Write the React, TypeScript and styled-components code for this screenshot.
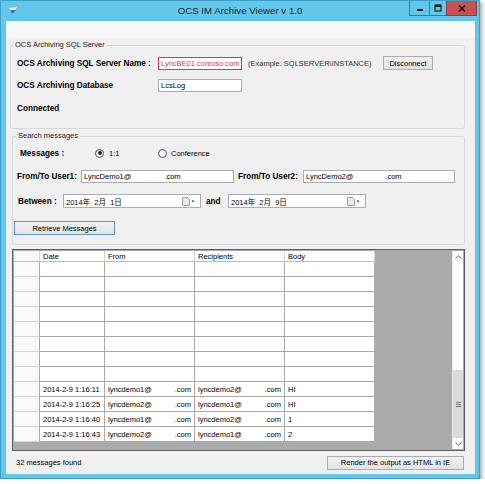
import React from "react";
import styled, { createGlobalStyle } from "styled-components";

const SANS = `"Liberation Sans", Arial, "Noto Sans CJK SC", sans-serif`;

const colors = {
  frame: "#63c7eb",
  frameEdge: "#3f9fc9",
  face: "#f0f0f0",
  groupLine: "#d3d8dc",
  field: "#abadb3",
  alert: "#e2363c",
  gridLine: "#a9a9a9",
  workspace: "#ababab",
};

const GlobalStyle = createGlobalStyle`
  html, body { margin: 0; padding: 0; background: #fff; }
  body { font-family: ${SANS}; font-size: 7.5px; color: #000; }
  *, *::before, *::after { box-sizing: border-box; }
`;

const Window = styled.div`
  width: 480px;
  height: 479px;
  display: flex;
  flex-direction: column;
  background: ${colors.frame};
  border: 1px solid ${colors.frameEdge};
  box-shadow: 2px 2px 4px rgba(0, 0, 0, 0.35);
`;

const TitleBar = styled.div`
  height: 20px;
  display: grid;
  grid-template-columns: 1fr auto 1fr;
`;

const AppIcon = styled.div`
  padding: 5px 0 0 6px;
  line-height: 0;
`;

const Title = styled.div`
  font-size: 9.7px;
  line-height: 20px;
  color: #1e1e1e;
  white-space: nowrap;
`;

const CaptionButtons = styled.div`
  justify-self: end;
  display: flex;
  align-items: flex-start;
  margin-right: 2px;
`;

type CaptionKind = "min" | "max" | "close";

const captionWidth: Record<CaptionKind, number> = { min: 21, max: 18, close: 31 };

const CaptionButton = styled.div<{ $kind: CaptionKind }>`
  width: ${(p) => captionWidth[p.$kind]}px;
  height: 15px;
  margin-left: -1px;
  display: flex;
  align-items: center;
  justify-content: center;
  background: ${(p) => (p.$kind === "close" ? "#c75050" : colors.frame)};
  border: 1px solid ${(p) => (p.$kind === "close" ? "#8d3b3b" : "#2f7fa3")};
  border-top: none;
  line-height: 0;
`;

const Client = styled.div`
  flex: 1;
  margin: 0 4px 4px 5px;
  background: ${colors.face};
  display: flex;
  flex-direction: column;
`;

const MenuBand = styled.div`
  height: 17px;
  background: #f8f8f8;
`;

const GroupBox = styled.fieldset<{ $left: number; $bottom: number }>`
  margin: 2px 10px 0 ${(p) => p.$left}px;
  padding: 0 0 ${(p) => p.$bottom}px 0;
  min-width: 0;
  border: 1px solid ${colors.groupLine};
  border-radius: 3px;
`;

const Legend = styled.legend<{ $indent: number }>`
  margin-left: ${(p) => p.$indent}px;
  padding: 0 2px;
  font-size: 7.5px;
  line-height: 10px;
  color: #1a1a1a;
`;

const FieldRow = styled.div<{ $top: number; $indent: number }>`
  display: flex;
  align-items: center;
  height: 16px;
  margin-top: ${(p) => p.$top}px;
  padding-left: ${(p) => p.$indent}px;
`;

const Label = styled.span<{ $w?: number; $gap?: number }>`
  flex: none;
  width: ${(p) => (p.$w ? `${p.$w}px` : "auto")};
  margin-left: ${(p) => p.$gap ?? 0}px;
  font-size: 8.2px;
  font-weight: bold;
  white-space: nowrap;
`;

const Hint = styled.span`
  flex: none;
  width: 141px;
  padding-left: 6px;
  color: #333;
  white-space: nowrap;
`;

const TextBox = styled.div<{ $w: number; $alert?: boolean }>`
  flex: none;
  width: ${(p) => p.$w}px;
  height: 13px;
  display: flex;
  align-items: center;
  padding-left: 2px;
  background: #fff;
  border: 1px solid ${(p) => (p.$alert ? colors.alert : colors.field)};
  color: ${(p) => (p.$alert ? colors.alert : "#000")};
  white-space: nowrap;
  overflow: hidden;
`;

const Blank = styled.span<{ $w: number }>`
  display: inline-block;
  width: ${(p) => p.$w}px;
`;

const Button = styled.div<{ $w: number; $default?: boolean }>`
  flex: none;
  width: ${(p) => p.$w}px;
  height: 14px;
  display: flex;
  align-items: center;
  justify-content: center;
  background: linear-gradient(#f2f2f2, #e3e3e3);
  border: 1px solid ${(p) => (p.$default ? "#5f98d0" : "#acacac")};
  white-space: nowrap;
`;

const RadioOption = styled.label<{ $w: number; $gap: number }>`
  flex: none;
  width: ${(p) => p.$w}px;
  display: flex;
  align-items: center;
  gap: ${(p) => p.$gap}px;
`;

const RadioDot = styled.span<{ $checked?: boolean }>`
  width: 9px;
  height: 9px;
  border-radius: 50%;
  border: 1px solid #4d4d4d;
  background: #fff;
  display: flex;
  align-items: center;
  justify-content: center;

  &::after {
    content: "";
    width: 4px;
    height: 4px;
    border-radius: 50%;
    background: ${(p) => (p.$checked ? "#262626" : "transparent")};
  }
`;

const DatePicker = styled.div`
  flex: none;
  width: 138px;
  height: 14px;
  display: flex;
  align-items: center;
  justify-content: space-between;
  padding: 0 5px 0 2px;
  background: #fff;
  border: 1px solid ${colors.field};
  white-space: pre;
`;

const Grid = styled.div`
  margin: 4px 10px 0 6px;
  height: 202px;
  display: flex;
  padding: 1px;
  background: ${colors.workspace};
  border: 1px solid #5f5f5f;
`;

const GridBody = styled.div`
  flex: 1;
`;

const GridRow = styled.div<{ $header?: boolean }>`
  display: flex;
  height: ${(p) => (p.$header ? 11 : 15)}px;
`;

type CellKind = "corner" | "colHead" | "rowHead" | "data";

const Cell = styled.div<{ $w: number; $kind: CellKind }>`
  flex: none;
  width: ${(p) => p.$w}px;
  display: flex;
  align-items: center;
  justify-content: space-between;
  padding: 0 3px;
  white-space: nowrap;
  overflow: hidden;
  background: ${(p) => (p.$kind === "rowHead" || p.$kind === "corner" ? "#f9f9f9" : "#fff")};
  border-right: 1px solid
    ${(p) => (p.$kind === "colHead" || p.$kind === "corner" ? "#d4d4d4" : colors.gridLine)};
  border-bottom: 1px solid
    ${(p) => (p.$kind === "rowHead" ? "#d6d6d6" : p.$kind === "data" ? colors.gridLine : "#bdbdbd")};
`;

const ScrollBar = styled.div`
  width: 11px;
  display: flex;
  flex-direction: column;
  background: #fff;
  border-left: 1px solid #e6e6e6;
`;

const ScrollArrow = styled.div`
  height: 11px;
  display: flex;
  align-items: center;
  justify-content: center;
  background: #fff;
  line-height: 0;
`;

const ScrollTrack = styled.div`
  flex: 1;
  display: flex;
  flex-direction: column;
  justify-content: flex-end;
`;

const ScrollThumb = styled.div`
  height: 68px;
  display: flex;
  align-items: center;
  justify-content: center;
  background: #dadada;
  line-height: 0;
`;

const StatusBar = styled.div`
  flex: 1;
  display: flex;
  align-items: center;
  justify-content: space-between;
  padding: 0 11px 0 10px;
`;

const columns = [
  { title: "", w: 26 },
  { title: "Date", w: 65 },
  { title: "From", w: 90 },
  { title: "Recipients", w: 90 },
  { title: "Body", w: 90 },
];

const messages = [
  { date: "2014-2-9 1:16:11", from: "lyncdemo1@", to: "lyncdemo2@", body: "HI" },
  { date: "2014-2-9 1:16:25", from: "lyncdemo2@", to: "lyncdemo1@", body: "HI" },
  { date: "2014-2-9 1:16:40", from: "lyncdemo1@", to: "lyncdemo2@", body: "1" },
  { date: "2014-2-9 1:16:43", from: "lyncdemo2@", to: "lyncdemo1@", body: "2" },
];

const EMPTY_ROWS = 8;

const WindowIcon = () => (
  <svg width="12" height="8" viewBox="0 0 12 8">
    <path d="M1 1.5 L10.5 0.8 L9 4 L3.5 4.4 Z" fill="#f5f7f8" stroke="#8c9aa5" strokeWidth="0.6" />
    <path d="M3.5 4.4 L8.6 4 L6.4 7.2 L4.6 7 Z" fill="#2e73bb" />
  </svg>
);

const CaptionGlyph = ({ kind }: { kind: CaptionKind }) => {
  if (kind === "min") {
    return (
      <svg width="8" height="8" viewBox="0 0 8 8">
        <rect x="1" y="5" width="6" height="2" fill="#1b1b1b" />
      </svg>
    );
  }
  if (kind === "max") {
    return (
      <svg width="8" height="8" viewBox="0 0 8 8">
        <rect x="1" y="1" width="6" height="6" fill="none" stroke="#1b1b1b" strokeWidth="1.2" />
        <rect x="1" y="1" width="6" height="2" fill="#1b1b1b" />
      </svg>
    );
  }
  return (
    <svg width="8" height="7" viewBox="0 0 8 7">
      <path d="M1 0.5 L7 6.5 M7 0.5 L1 6.5" stroke="#1b1b1b" strokeWidth="1.6" />
    </svg>
  );
};

const CalendarDrop = () => (
  <svg width="13" height="9" viewBox="0 0 13 9">
    <path d="M0.5 0.5 H5.5 L7.5 2.5 V8.5 H0.5 Z" fill="#e9e9e9" stroke="#9c9c9c" />
    <path d="M9.5 3.5 H12.5 L11 5.5 Z" fill="#3d3d3d" />
  </svg>
);

const Chevron = ({ up }: { up?: boolean }) => (
  <svg width="7" height="4" viewBox="0 0 7 4">
    <path d={up ? "M0.5 3.5 L3.5 0.8 L6.5 3.5" : "M0.5 0.5 L3.5 3.2 L6.5 0.5"} fill="none" stroke="#606060" />
  </svg>
);

const Grip = () => (
  <svg width="5" height="5" viewBox="0 0 5 5">
    <path d="M0 0.5 H5 M0 2.5 H5 M0 4.5 H5" stroke="#777" />
  </svg>
);

const Email = ({ user }: { user: string }) => (
  <>
    <span>{user}</span>
    <span>.com</span>
  </>
);

export default function App() {
  return (
    <>
      <GlobalStyle />
      <Window>
        <TitleBar>
          <AppIcon>
            <WindowIcon />
          </AppIcon>
          <Title>OCS IM Archive Viewer v 1.0</Title>
          <CaptionButtons>
            {(["min", "max", "close"] as CaptionKind[]).map((kind) => (
              <CaptionButton key={kind} $kind={kind}>
                <CaptionGlyph kind={kind} />
              </CaptionButton>
            ))}
          </CaptionButtons>
        </TitleBar>

        <Client>
          <MenuBand />

          <GroupBox $left={4} $bottom={12}>
            <Legend $indent={2}>OCS Archiving SQL Server</Legend>
            <FieldRow $top={5} $indent={6}>
              <Label $w={141}>OCS Archiving SQL Server Name :</Label>
              <TextBox $w={84} $alert>
                LyncBE01.contoso.com
              </TextBox>
              <Hint>(Example: SQLSERVER\INSTANCE)</Hint>
              <Button $w={50}>Disconnect</Button>
            </FieldRow>
            <FieldRow $top={6} $indent={6}>
              <Label $w={141}>OCS Archiving Database</Label>
              <TextBox $w={84}>LcsLog</TextBox>
            </FieldRow>
            <FieldRow $top={7} $indent={6}>
              <Label>Connected</Label>
            </FieldRow>
          </GroupBox>

          <GroupBox $left={6} $bottom={8}>
            <Legend $indent={3}>Search messages</Legend>
            <FieldRow $top={4} $indent={7}>
              <Label $w={75}>Messages :</Label>
              <RadioOption $w={63} $gap={5}>
                <RadioDot $checked />
                1:1
              </RadioOption>
              <RadioOption $w={90} $gap={4}>
                <RadioDot />
                Conference
              </RadioOption>
            </FieldRow>
            <FieldRow $top={7} $indent={4}>
              <Label $w={64}>From/To User1:</Label>
              <TextBox $w={153}>
                LyncDemo1@<Blank $w={33} />.com
              </TextBox>
              <Label $w={65} $gap={4}>
                From/To User2:
              </Label>
              <TextBox $w={152}>
                LyncDemo2@<Blank $w={32} />.com
              </TextBox>
            </FieldRow>
            <FieldRow $top={9} $indent={5}>
              <Label $w={45}>Between :</Label>
              <DatePicker>
                <span>2014年  2月  1日</span>
                <CalendarDrop />
              </DatePicker>
              <Label $w={22} $gap={5}>
                and
              </Label>
              <DatePicker>
                <span>2014年  2月  9日</span>
                <CalendarDrop />
              </DatePicker>
            </FieldRow>
            <FieldRow $top={11} $indent={1}>
              <Button $w={101} $default>
                Retrieve Messages
              </Button>
            </FieldRow>
          </GroupBox>

          <Grid>
            <GridBody>
              <GridRow $header>
                {columns.map((c, i) => (
                  <Cell key={i} $w={c.w} $kind={i === 0 ? "corner" : "colHead"}>
                    {c.title}
                  </Cell>
                ))}
              </GridRow>
              {Array.from({ length: EMPTY_ROWS }).map((_, r) => (
                <GridRow key={`e${r}`}>
                  {columns.map((c, i) => (
                    <Cell key={i} $w={c.w} $kind={i === 0 ? "rowHead" : "data"} />
                  ))}
                </GridRow>
              ))}
              {messages.map((m) => (
                <GridRow key={m.date}>
                  <Cell $w={columns[0].w} $kind="rowHead" />
                  <Cell $w={columns[1].w} $kind="data">
                    {m.date}
                  </Cell>
                  <Cell $w={columns[2].w} $kind="data">
                    <Email user={m.from} />
                  </Cell>
                  <Cell $w={columns[3].w} $kind="data">
                    <Email user={m.to} />
                  </Cell>
                  <Cell $w={columns[4].w} $kind="data">
                    {m.body}
                  </Cell>
                </GridRow>
              ))}
            </GridBody>
            <ScrollBar>
              <ScrollArrow>
                <Chevron up />
              </ScrollArrow>
              <ScrollTrack>
                <ScrollThumb>
                  <Grip />
                </ScrollThumb>
              </ScrollTrack>
              <ScrollArrow>
                <Chevron />
              </ScrollArrow>
            </ScrollBar>
          </Grid>

          <StatusBar>
            <span>32 messages found</span>
            <Button $w={137}>Render the output as HTML in IE</Button>
          </StatusBar>
        </Client>
      </Window>
    </>
  );
}
